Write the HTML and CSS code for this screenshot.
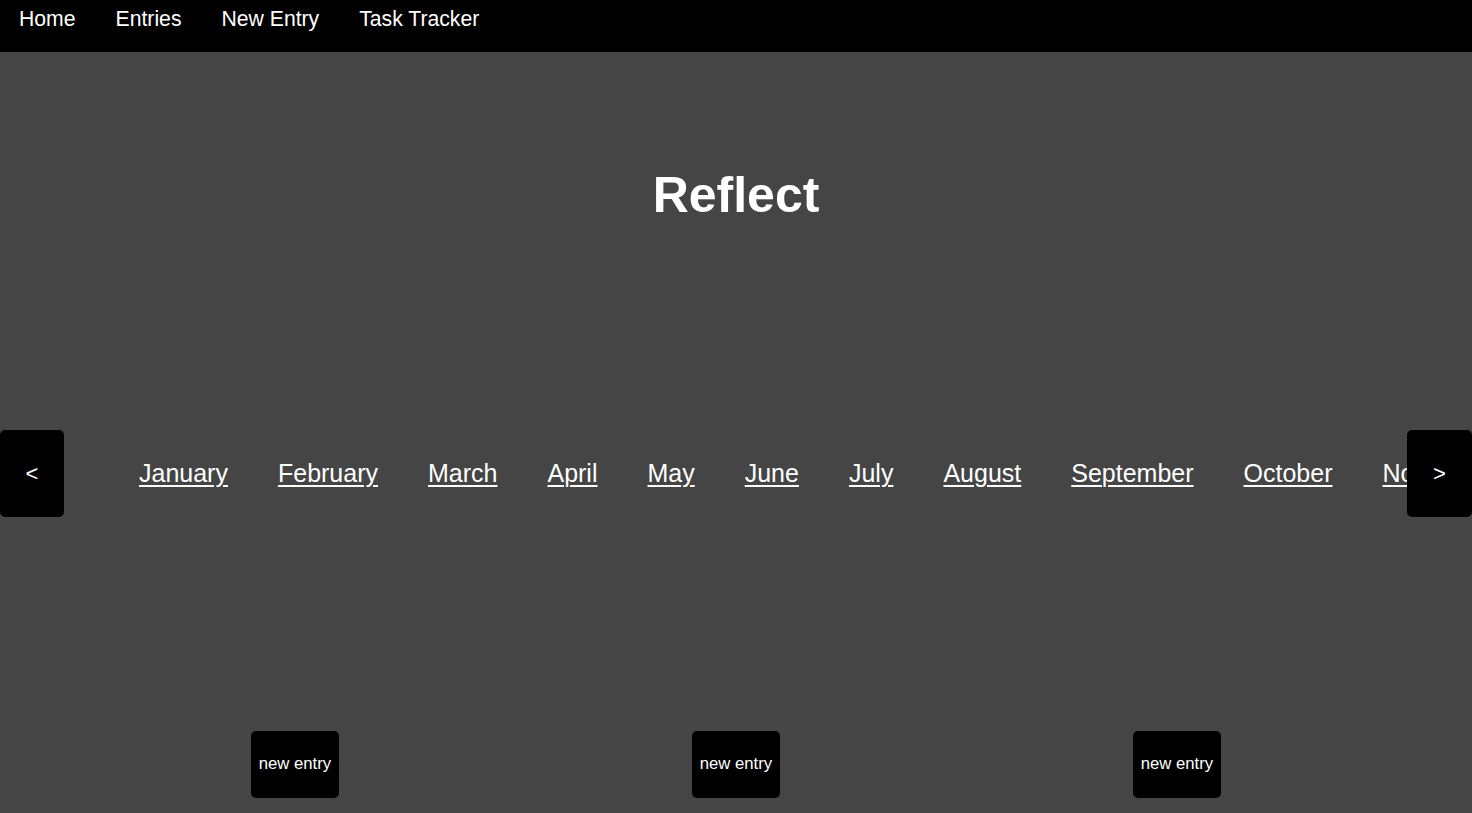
FILE: index.html
```html
<!DOCTYPE html>
<html lang="en">
<head>
<meta charset="utf-8">
<title>Reflect</title>
<link rel="stylesheet" href="styles.css">
</head>
<body>
<nav class="topnav">
  <a class="navlink" href="#">Home</a>
  <a class="navlink" href="#">Entries</a>
  <a class="navlink" href="#">New Entry</a>
  <a class="navlink" href="#">Task Tracker</a>
</nav>
<main class="page">
  <h1 class="title">Reflect</h1>
  <section class="carousel">
    <button class="arrow arrow-left">&lt;</button>
    <div class="months">
      <a class="month" href="#">January</a>
      <a class="month" href="#">February</a>
      <a class="month" href="#">March</a>
      <a class="month" href="#">April</a>
      <a class="month" href="#">May</a>
      <a class="month" href="#">June</a>
      <a class="month" href="#">July</a>
      <a class="month" href="#">August</a>
      <a class="month" href="#">September</a>
      <a class="month" href="#">October</a>
      <a class="month" href="#">November</a>
      <a class="month" href="#">December</a>
    </div>
    <button class="arrow arrow-right">&gt;</button>
  </section>
  <section class="entries">
    <div class="entry-col"><button class="entry-btn">new entry</button></div>
    <div class="entry-col"><button class="entry-btn">new entry</button></div>
    <div class="entry-col"><button class="entry-btn">new entry</button></div>
  </section>
</main>
</body>
</html>
```
FILE: styles.css
```css
html, body {
  margin: 0;
  padding: 0;
}
body {
  background: #454545;
  font-family: "Liberation Sans", Arial, sans-serif;
  color: #fff;
  overflow: hidden;
}
.topnav {
  background: #000;
  height: 52px;
  box-sizing: border-box;
  padding: 7px 0 0 19px;
  display: flex;
  gap: 40px;
  align-items: flex-start;
}
.navlink {
  color: #fff;
  text-decoration: none;
  font-size: 21.2px;
  line-height: 24px;
}
.page {
  display: flex;
  flex-direction: column;
}
.title {
  margin: 114px 0 0;
  text-align: center;
  font-size: 50px;
  font-weight: bold;
  line-height: 58px;
}
.carousel {
  position: relative;
  margin-top: 206px;
  height: 87px;
  display: flex;
  align-items: center;
}
.months {
  display: flex;
  gap: 50px;
  padding-left: 139px;
  overflow: hidden;
  white-space: nowrap;
  width: 100%;
  box-sizing: border-box;
}
.month {
  color: #fff;
  font-size: 25px;
  text-decoration: underline;
  text-underline-offset: 3px;
  text-decoration-thickness: 2px;
  flex: none;
}
.arrow {
  position: absolute;
  top: 0;
  height: 87px;
  background: #000;
  color: #fff;
  border: none;
  border-radius: 5px;
  font-family: "Liberation Sans", Arial, sans-serif;
  font-size: 22px;
  padding: 0;
  cursor: pointer;
}
.arrow-left {
  left: 0;
  width: 64px;
}
.arrow-right {
  right: 0;
  width: 65px;
}
.entries {
  margin: 214px 0 0;
  display: grid;
  grid-template-columns: repeat(3, 441px);
  justify-content: center;
}
.entry-col {
  display: flex;
  justify-content: center;
}
.entry-btn {
  background: #000;
  color: #fff;
  border: none;
  border-radius: 5px;
  height: 67px;
  padding: 0 8px 2px;
  font-family: "Liberation Sans", Arial, sans-serif;
  font-size: 16.7px;
}
```
